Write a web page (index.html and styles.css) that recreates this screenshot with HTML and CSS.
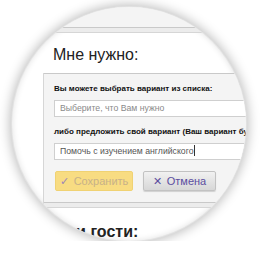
FILE: index.html
```html
<!DOCTYPE html>
<html lang="ru">
<head>
    <meta charset="UTF-8">
    <meta name="viewport" content="width=device-width, initial-scale=1.0">
    <title>Мне нужно</title>
    <link rel="stylesheet" href="styles.css">
</head>
<body>
    <div class="lens">
        <div class="page">
            <div class="panel-wrap">
                <div class="panel panel-prev"></div>
            </div>
            <h2 class="title">Мне нужно:</h2>
            <div class="panel-wrap">
                <form class="panel">
                    <label class="field-label">Вы можете выбрать вариант из списка:</label>
                    <div class="input input-placeholder">Выберите, что Вам нужно</div>
                    <label class="field-label">либо предложить свой вариант (Ваш вариант будет добавлен в список)</label>
                    <div class="input">Помочь с изучением английского<span class="caret"></span></div>
                    <div class="buttons">
                        <button type="button" class="btn btn-save"><span class="btn-icon">✓</span>Сохранить</button>
                        <button type="button" class="btn btn-cancel"><span class="btn-icon">✕</span>Отмена</button>
                    </div>
                </form>
            </div>
            <h2 class="title title-next">Мои гости:</h2>
        </div>
    </div>
</body>
</html>
```

FILE: styles.css
```css
body { margin: 0; background: #fff; font-family: "Liberation Sans", Arial, sans-serif; }
.lens { width: 234px; height: 234px; margin: 7px 0 0 12px; border-radius: 50%; overflow: hidden; background: #fff; box-shadow: 0 0 0 1px #e2e2e2, 0 0 12px 2px rgba(0,0,0,0.28), inset 0 0 6px rgba(0,0,0,0.12); position: relative; }
.page { padding-left: 31px; width: 320px; }
.panel-wrap { border: 1px solid #d6d6d6; border-top: none; padding-bottom: 4px; background: #ececec; }
.panel { display: block; margin: 0; background: #f4f4f4; border: 1px solid #c9c9c9; border-left: none; border-right: none; padding: 9px 0 11px 10px; }
.panel-prev { height: 20px; border-top: none; padding: 0; }
.title { margin: 12px 0 8px 10px; font-size: 16px; line-height: 20px; font-weight: normal; color: #222; }
.title-next { margin-top: 14px; font-weight: bold; }
.field-label { display: block; font-size: 8px; line-height: 12px; font-weight: bold; color: #111; white-space: nowrap; }
.input { margin: 5px 0 9px; height: 15px; border: 1px solid #cfcfcf; background: #fff; padding-left: 5px; font-size: 8.7px; line-height: 15px; color: #555; white-space: nowrap; }
.input-placeholder { color: #8a8a8a; }
.caret { display: inline-block; width: 1px; height: 11px; background: #333; vertical-align: -2px; }
.buttons { display: flex; gap: 10px; margin-top: 11px; padding-left: 1px; }
.btn { height: 20px; border-radius: 2px; font-family: inherit; font-size: 11px; padding: 0; display: flex; align-items: center; justify-content: center; }
.btn-icon { margin-right: 5px; font-size: 11px; }
.btn-save { width: 78px; background: #f8dc82; border: 1px solid #f0d273; color: #c7b189; }
.btn-save .btn-icon { color: #9c86b8; }
.btn-cancel { width: 73px; background: linear-gradient(#f1f1f1, #d7d7d7); border: 1px solid #c2c2c2; color: #5b4d9f; box-shadow: 0 1px 1px rgba(0,0,0,0.15); }
```
